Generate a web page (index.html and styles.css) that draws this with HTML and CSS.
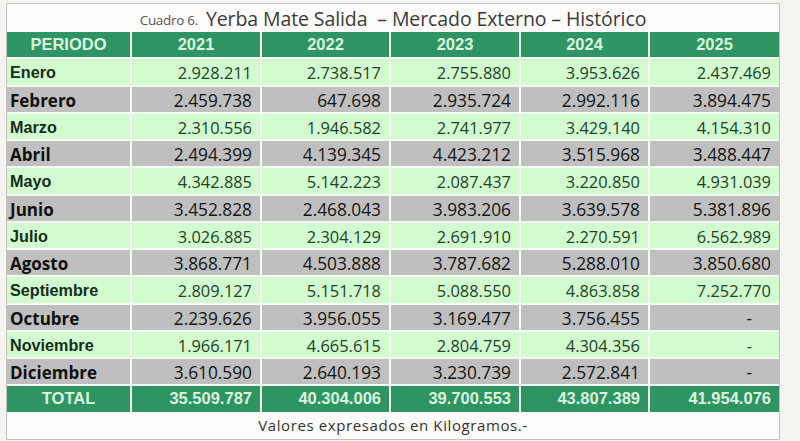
FILE: index.html
```html
<!DOCTYPE html>
<html lang="es">
<head>
<meta charset="utf-8">
<title>Yerba Mate Salida – Mercado Externo – Histórico</title>
<link rel="stylesheet" href="styles.css">
</head>
<body>
<div class="box">
  <div class="title"><span class="cuadro">Cuadro 6.</span> <span class="main">Yerba Mate Salida &nbsp;– Mercado Externo – Histórico</span></div>
  <div class="table">
    <div class="row head"><div class="c lab">PERIODO</div><div class="c">2021</div><div class="c">2022</div><div class="c">2023</div><div class="c">2024</div><div class="c">2025</div></div>
    <div class="row lt"><div class="c lab">Enero</div><div class="c">2.928.211</div><div class="c">2.738.517</div><div class="c">2.755.880</div><div class="c">3.953.626</div><div class="c">2.437.469</div></div>
    <div class="row gr"><div class="c lab">Febrero</div><div class="c">2.459.738</div><div class="c">647.698</div><div class="c">2.935.724</div><div class="c">2.992.116</div><div class="c">3.894.475</div></div>
    <div class="row lt"><div class="c lab">Marzo</div><div class="c">2.310.556</div><div class="c">1.946.582</div><div class="c">2.741.977</div><div class="c">3.429.140</div><div class="c">4.154.310</div></div>
    <div class="row gr"><div class="c lab">Abril</div><div class="c">2.494.399</div><div class="c">4.139.345</div><div class="c">4.423.212</div><div class="c">3.515.968</div><div class="c">3.488.447</div></div>
    <div class="row lt"><div class="c lab">Mayo</div><div class="c">4.342.885</div><div class="c">5.142.223</div><div class="c">2.087.437</div><div class="c">3.220.850</div><div class="c">4.931.039</div></div>
    <div class="row gr"><div class="c lab">Junio</div><div class="c">3.452.828</div><div class="c">2.468.043</div><div class="c">3.983.206</div><div class="c">3.639.578</div><div class="c">5.381.896</div></div>
    <div class="row lt"><div class="c lab">Julio</div><div class="c">3.026.885</div><div class="c">2.304.129</div><div class="c">2.691.910</div><div class="c">2.270.591</div><div class="c">6.562.989</div></div>
    <div class="row gr"><div class="c lab">Agosto</div><div class="c">3.868.771</div><div class="c">4.503.888</div><div class="c">3.787.682</div><div class="c">5.288.010</div><div class="c">3.850.680</div></div>
    <div class="row lt"><div class="c lab">Septiembre</div><div class="c">2.809.127</div><div class="c">5.151.718</div><div class="c">5.088.550</div><div class="c">4.863.858</div><div class="c">7.252.770</div></div>
    <div class="row gr"><div class="c lab">Octubre</div><div class="c">2.239.626</div><div class="c">3.956.055</div><div class="c">3.169.477</div><div class="c">3.756.455</div><div class="c dash">-</div></div>
    <div class="row lt"><div class="c lab">Noviembre</div><div class="c">1.966.171</div><div class="c">4.665.615</div><div class="c">2.804.759</div><div class="c">4.304.356</div><div class="c dash">-</div></div>
    <div class="row gr"><div class="c lab">Diciembre</div><div class="c">3.610.590</div><div class="c">2.640.193</div><div class="c">3.230.739</div><div class="c">2.572.841</div><div class="c dash">-</div></div>
    <div class="row tot"><div class="c lab">TOTAL</div><div class="c">35.509.787</div><div class="c">40.304.006</div><div class="c">39.700.553</div><div class="c">43.807.389</div><div class="c">41.954.076</div></div>
  </div>
  <div class="foot">Valores expresados en Kilogramos.-</div>
</div>
</body>
</html>
```
FILE: styles.css
```css
html, body {
  margin: 0;
  padding: 0;
}
body {
  background: #f6f4f0;
  width: 800px;
  height: 441px;
  overflow: hidden;
  padding-top: 3px;
  padding-left: 6px;
  box-sizing: border-box;
}
.box {
  width: 772px;
  border: 1px solid #c4c2bf;
  background: #fdfcfa;
}
.title {
  height: 28px;
  display: flex;
  align-items: flex-end;
  justify-content: center;
  gap: 8px;
  color: #3a3a3a;
  font-family: "Open Sans", sans-serif;
  line-height: 1;
  padding-bottom: 4px;
  box-sizing: border-box;
}
.cuadro {
  font-size: 13.5px;
  color: #555;
  letter-spacing: -0.3px;
  padding-bottom: 1px;
}
.main {
  font-size: 19.5px;
  letter-spacing: -0.1px;
}
.table {
  display: flex;
  flex-direction: column;
  gap: 2px;
  background: #f4fbf2;
}
.row {
  display: grid;
  grid-template-columns: 123px 128px 127px 128px 127px 129px;
  column-gap: 2px;
  height: 25.25px;
  background: #f4fbf2;
}
.c {
  display: flex;
  align-items: center;
  justify-content: flex-end;
  padding-right: 8px;
  font-family: "Open Sans", sans-serif;
  white-space: nowrap;
}
.lab {
  justify-content: flex-start;
  padding-left: 3px;
  padding-right: 0;
}
.lt .c, .gr .c {
  padding-top: 2px;
  box-sizing: border-box;
}
.head .c, .tot .c {
  background: #2e9462;
  color: #dcf5df;
  font-family: "Liberation Sans", Arial, sans-serif;
  font-weight: bold;
  justify-content: center;
  padding: 0;
  font-size: 16.5px;
}
.tot .c {
  justify-content: flex-end;
  padding-right: 8px;
}
.tot .lab {
  justify-content: center;
  padding-right: 0;
}
.lt .c {
  background: #d2fbd0;
  color: #1c4424;
  font-size: 16.4px;
}
.lt .lab {
  font-family: "Liberation Sans", Arial, sans-serif;
  font-weight: bold;
  font-size: 16.2px;
  color: #142e18;
}
.gr .c {
  background: #bfbfbf;
  color: #141414;
  font-size: 17.3px;
}
.gr .lab {
  font-weight: bold;
  font-size: 17px;
  color: #101010;
}
.c.dash {
  padding-right: 27px;
}
.foot {
  height: 27px;
  display: flex;
  align-items: center;
  justify-content: center;
  font-family: "Open Sans", sans-serif;
  font-size: 15px;
  letter-spacing: 0.6px;
  color: #333;
}
```
